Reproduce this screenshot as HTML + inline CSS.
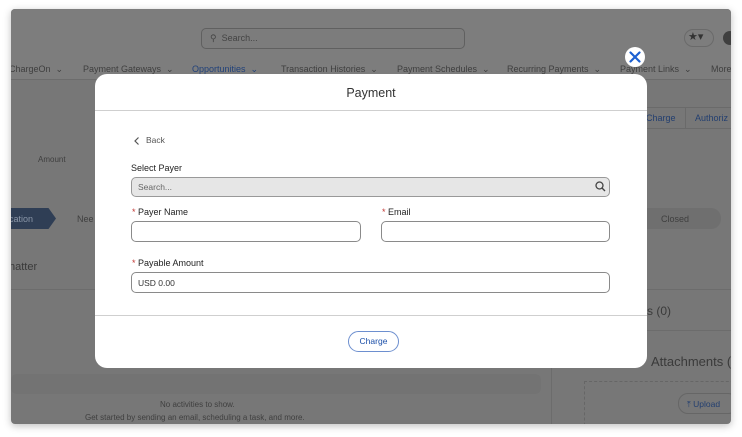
<!DOCTYPE html>
<html><head><style>
*{margin:0;padding:0;box-sizing:border-box}
body{width:742px;height:437px;background:#fff;font-family:"Liberation Sans",sans-serif;position:relative;overflow:hidden}
.card{position:absolute;left:11px;top:9px;width:720px;height:415px;background:#777;border-radius:4px;overflow:hidden;box-shadow:0 2px 8px rgba(0,0,0,.25)}
.a{position:absolute;white-space:nowrap}
.g{color:#3f3f3f;font-size:9px}
.modal{position:absolute;left:95px;top:74px;width:552px;height:294px;background:#fff;border-radius:12px}
.lbl{position:absolute;font-size:9px;color:#222}
.req{color:#c23934}
.inp{position:absolute;border:1px solid #8a8a8a;border-radius:5px;height:21px;background:#fff;font-size:8.5px;color:#333;padding:5px 6px}
</style></head><body>
<div class="card">
  <div class="a" style="left:0;top:0;width:720px;height:70px;background:#7d7d7d"></div>
  <div class="a" style="left:190px;top:19px;width:264px;height:21px;border:1px solid #606060;border-radius:5px;background:#7c7c7c"></div>
  <div class="a g" style="left:199px;top:24px;color:#444">&#9906;&nbsp; Search...</div>
  <div class="a" style="left:673px;top:20px;width:30px;height:18px;border:1px solid #6a6a6a;border-radius:9px;font-size:11px;color:#333;padding-left:3px">★▾</div>
  <div class="a" style="left:712px;top:22px;width:14px;height:14px;border-radius:7px;background:#3f3f3f"></div>
  <div class="a g" style="left:-2px;top:55px">ChargeOn &nbsp;⌄</div>
  <div class="a g" style="left:72px;top:55px">Payment Gateways &nbsp;⌄</div>
  <div class="a g" style="left:181px;top:55px;color:#22427a">Opportunities &nbsp;⌄</div>
  <div class="a g" style="left:270px;top:55px">Transaction Histories &nbsp;⌄</div>
  <div class="a g" style="left:386px;top:55px">Payment Schedules &nbsp;⌄</div>
  <div class="a g" style="left:496px;top:55px">Recurring Payments &nbsp;⌄</div>
  <div class="a g" style="left:609px;top:55px">Payment Links &nbsp;⌄</div>
  <div class="a g" style="left:700px;top:55px">More</div>
  <div class="a" style="left:0;top:70px;width:720px;height:1px;background:#6c6c6c"></div>
  <div class="a g" style="left:27px;top:146px;font-size:8px">Amount</div>
  <div class="a" style="left:625px;top:98px;width:100px;height:22px;border-top:1px solid #6a6a6a;border-bottom:1px solid #6a6a6a"></div>
  <div class="a g" style="left:635px;top:104px;color:#233f70">Charge</div>
  <div class="a" style="left:674px;top:98px;width:1px;height:22px;background:#6a6a6a"></div>
  <div class="a g" style="left:684px;top:104px;color:#233f70">Authoriz</div>
  <div class="a" style="left:-5px;top:199px;width:50px;height:21px;background:#2f3e55;clip-path:polygon(0 0,85% 0,100% 50%,85% 100%,0 100%)"></div>
  <div class="a g" style="left:-2px;top:205px;color:#8a96a8">cation</div>
  <div class="a g" style="left:66px;top:205px">Nee</div>
  <div class="a" style="left:600px;top:199px;width:110px;height:21px;background:#6f6f6f;border-radius:10px"></div>
  <div class="a g" style="left:650px;top:205px">Closed</div>
  <div class="a" style="left:-2px;top:252px;font-size:11px;color:#3a3a3a">hatter</div>
  <div class="a" style="left:0;top:280px;width:530px;height:1px;background:#6c6c6c"></div>
  <div class="a" style="left:0;top:365px;width:530px;height:20px;background:#737373;border-radius:6px"></div>
  <div class="a" style="left:540px;top:260px;width:1px;height:160px;background:#6c6c6c"></div>
  <div class="a" style="left:555px;top:280px;width:170px;height:1px;background:#6c6c6c"></div>
  <div class="a" style="left:636px;top:295px;font-size:12px;color:#3a3a3a">s (0)</div>
  <div class="a" style="left:555px;top:321px;width:170px;height:1px;background:#6c6c6c"></div>
  <div class="a" style="left:640px;top:345px;font-size:13px;color:#3a3a3a">Attachments (</div>
  <div class="a" style="left:573px;top:372px;width:160px;height:50px;border:1px dashed #666"></div>
  <div class="a" style="left:667px;top:384px;width:60px;height:21px;border:1px solid #666;border-radius:10px;font-size:8.5px;color:#233f70;padding:5px 8px">⤒ Upload</div>
  <div class="a g" style="left:149px;top:391px;font-size:8px">No activities to show.</div>
  <div class="a g" style="left:74px;top:404px;font-size:8px">Get started by sending an email, scheduling a task, and more.</div>
</div>

<div class="a" style="left:625px;top:47px;width:20px;height:20px;border-radius:10px;background:#fff"></div>
<svg class="a" style="left:625px;top:47px" width="20" height="20"><path d="M5.5 5.5L14.5 14.5M14.5 5.5L5.5 14.5" stroke="#1b5fd1" stroke-width="2.2" stroke-linecap="round"/></svg>

<div class="modal">
  <svg class="a" style="left:38px;top:62px" width="8" height="10"><path d="M5.5 1.5L2 5L5.5 8.5" fill="none" stroke="#555" stroke-width="1.2"/></svg>
  <div class="a" style="left:51px;top:61px;font-size:8.5px;color:#555">Back</div>
  <div class="a" style="left:0;top:12px;width:552px;text-align:center;font-size:12.5px;color:#333">Payment</div>
  <div class="a" style="left:0;top:36px;width:552px;height:1px;background:#cfcfcf"></div>
  <div class="lbl" style="left:36px;top:89px">Select Payer</div>
  <div class="inp" style="left:36px;top:103px;width:479px;height:20px;background:#e6e6e6;border-color:#999;color:#666;padding-top:4px">Search...</div>
  <svg class="a" style="left:500px;top:107px" width="11" height="11"><circle cx="4.5" cy="4.5" r="3.5" fill="none" stroke="#444" stroke-width="1.3"/><path d="M7 7L10 10" stroke="#444" stroke-width="1.4"/></svg>
  <div class="lbl" style="left:37px;top:133px"><span class="req">*</span> Payer Name</div>
  <div class="inp" style="left:36px;top:147px;width:230px"></div>
  <div class="lbl" style="left:287px;top:133px"><span class="req">*</span> Email</div>
  <div class="inp" style="left:286px;top:147px;width:229px"></div>
  <div class="lbl" style="left:37px;top:184px"><span class="req">*</span> Payable Amount</div>
  <div class="inp" style="left:36px;top:198px;width:479px">USD 0.00</div>
  <div class="a" style="left:0;top:241px;width:552px;height:1px;background:#cfcfcf"></div>
  <div class="a" style="left:253px;top:257px;width:51px;height:21px;border:1px solid #6d8fcf;border-radius:11px;font-size:8.5px;color:#1a4ea8;text-align:center;line-height:19px">Charge</div>
</div>
</body></html>
